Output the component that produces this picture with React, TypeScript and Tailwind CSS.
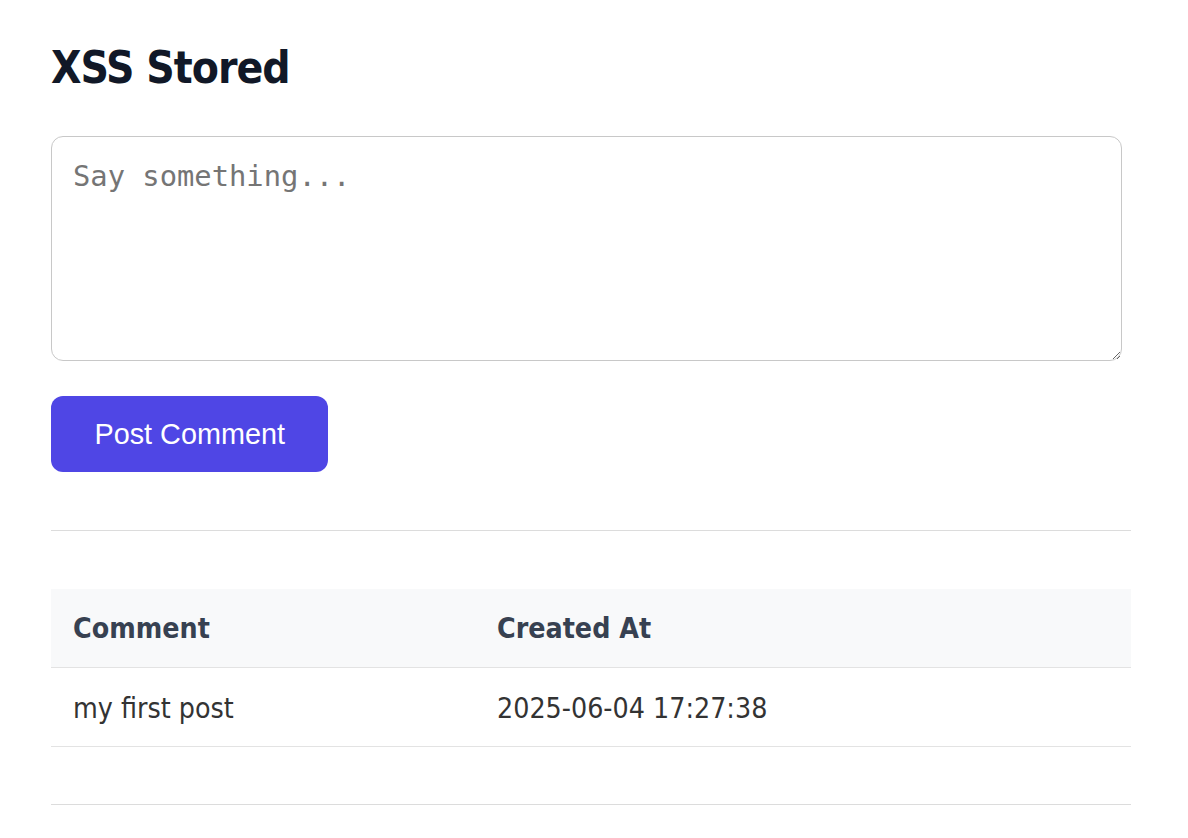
const comments = [{ id: 1, text: 'my first post', createdAt: '2025-06-04 17:27:38' }]

const sans = 'font-["DejaVu_Sans_Condensed","DejaVu_Sans",sans-serif]'

export default function App() {
  return (
    <div className="min-h-screen bg-white">
      <div className="w-[1080px] ml-[51px] pt-[40px]">
        <h1
          className={`${sans} text-[44px] leading-[56px] font-bold tracking-[-1px] text-[#111827]`}
        >
          XSS Stored
        </h1>

        <form className="mt-[40px]" onSubmit={(e) => e.preventDefault()}>
          <textarea
            placeholder="Say something..."
            className="block w-[1071px] h-[225px] border border-[#c8c8c8] rounded-[12px] pt-[22px] px-[21px] font-['DejaVu_Sans_Mono',monospace] text-[28.8px] leading-[35.6px] text-[#222] placeholder:text-[#757575] outline-none"
          />
          <button
            type="submit"
            className="mt-[35px] h-[76px] px-[43.5px] rounded-[12px] bg-[#4f46e5] text-white font-['Liberation_Sans',Arial,sans-serif] text-[28.8px] leading-none"
          >
            Post Comment
          </button>
        </form>

        <hr className="mt-[58px] border-0 border-t border-[#dcdcdc]" />

        <table className={`${sans} mt-[58px] w-full border-collapse text-left text-[28.3px]`}>
          <thead>
            <tr className="bg-[#f8f9fa] border-b border-[#e3e3e3]">
              <th className="w-[424px] h-[78px] pl-[22px] pt-[2px] font-bold text-[#374151]">Comment</th>
              <th className="h-[78px] pl-[22px] pt-[2px] font-bold text-[#374151]">Created At</th>
            </tr>
          </thead>
          <tbody>
            {comments.map((c) => (
              <tr key={c.id} className="border-b border-[#e3e3e3]">
                <td className="h-[79px] pl-[22px] pt-[5px] text-[#333]">{c.text}</td>
                <td className="h-[79px] pl-[22px] pt-[5px] text-[#333]">{c.createdAt}</td>
              </tr>
            ))}
          </tbody>
        </table>

        <hr className="mt-[57px] border-0 border-t border-[#dcdcdc]" />
      </div>
    </div>
  )
}
